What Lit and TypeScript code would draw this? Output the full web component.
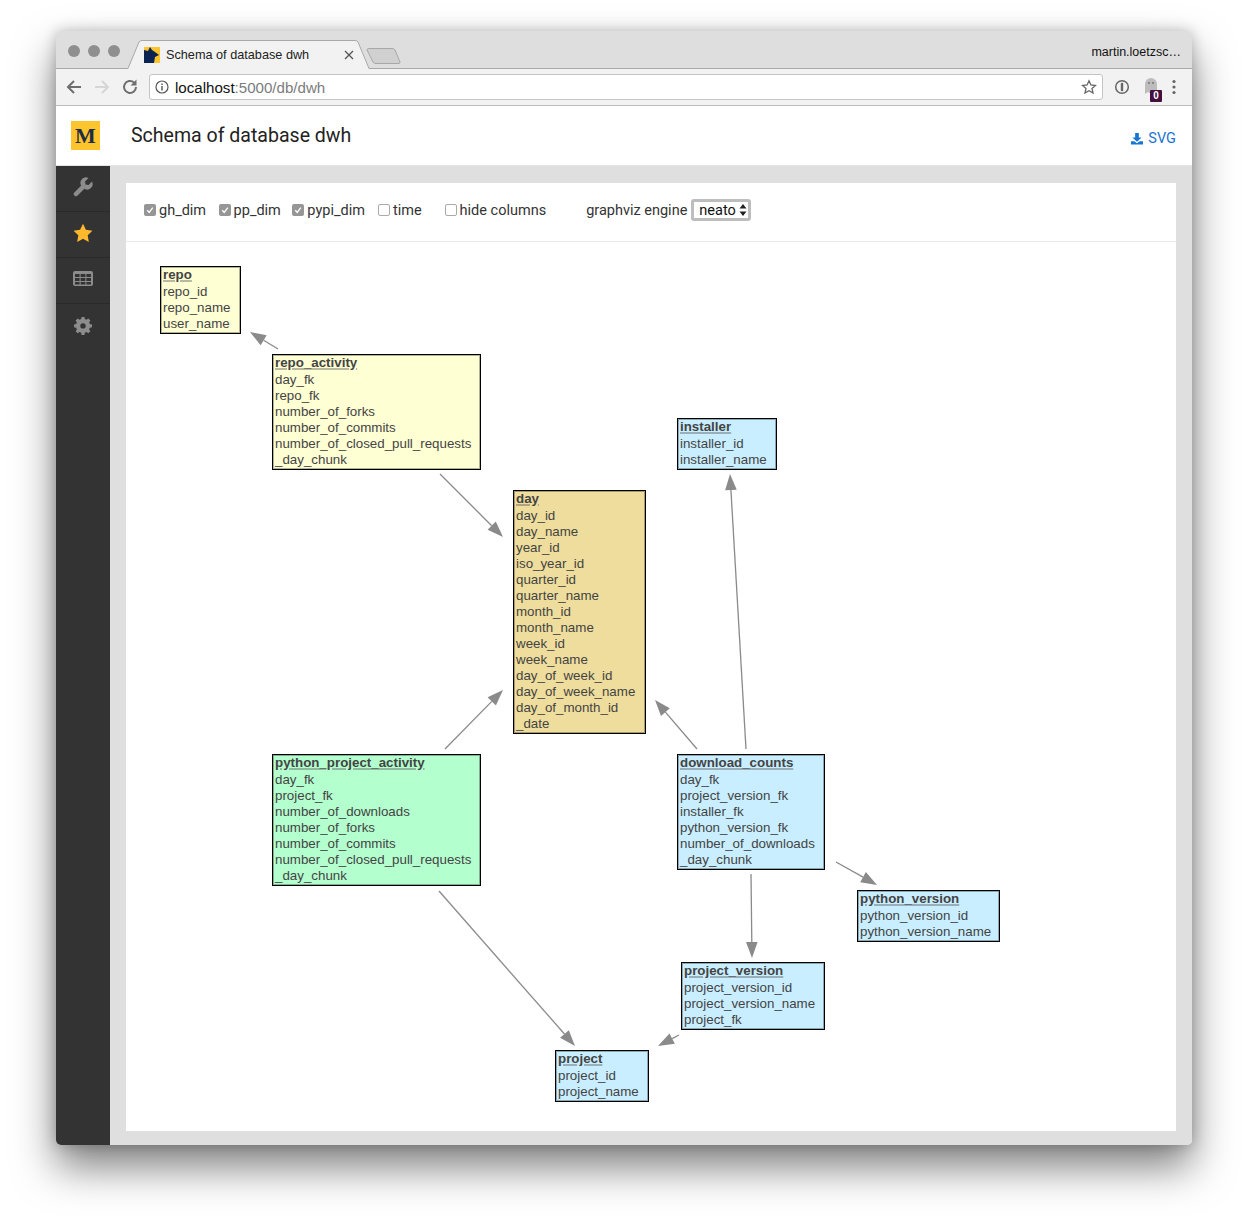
import { LitElement, html, css, svg } from "lit";
import { customElement } from "lit/decorators.js";

type Node = { t: string; c: string[]; x: number; y: number; w: number; h: number; k: string };
const nodes: Node[] = [
  { t: "repo", c: ["repo_id", "repo_name", "user_name"], x: 34, y: 24, w: 81, h: 68, k: "y" },
  { t: "repo_activity", c: ["day_fk", "repo_fk", "number_of_forks", "number_of_commits", "number_of_closed_pull_requests", "_day_chunk"], x: 146, y: 112, w: 209, h: 116, k: "y" },
  { t: "installer", c: ["installer_id", "installer_name"], x: 551, y: 176, w: 100, h: 52, k: "b" },
  { t: "day", c: ["day_id", "day_name", "year_id", "iso_year_id", "quarter_id", "quarter_name", "month_id", "month_name", "week_id", "week_name", "day_of_week_id", "day_of_week_name", "day_of_month_id", "_date"], x: 387, y: 248, w: 133, h: 244, k: "o" },
  { t: "python_project_activity", c: ["day_fk", "project_fk", "number_of_downloads", "number_of_forks", "number_of_commits", "number_of_closed_pull_requests", "_day_chunk"], x: 146, y: 512, w: 209, h: 132, k: "g" },
  { t: "download_counts", c: ["day_fk", "project_version_fk", "installer_fk", "python_version_fk", "number_of_downloads", "_day_chunk"], x: 551, y: 512, w: 148, h: 116, k: "b" },
  { t: "python_version", c: ["python_version_id", "python_version_name"], x: 731, y: 648, w: 143, h: 52, k: "b" },
  { t: "project_version", c: ["project_version_id", "project_version_name", "project_fk"], x: 555, y: 720, w: 144, h: 68, k: "b" },
  { t: "project", c: ["project_id", "project_name"], x: 429, y: 808, w: 94, h: 52, k: "b" },
];

// page coordinates of the edges; the canvas origin is (126,242)
const edges: [number, number, number, number][] = [
  [278, 349, 250, 332],
  [440, 474, 503, 537],
  [445, 749, 503, 690],
  [697, 749, 655, 700],
  [746, 749, 730, 474],
  [439, 891, 575, 1046],
  [751, 874, 752, 958],
  [836, 862, 877, 885],
  [679, 1035, 658, 1046],
];

function arrow(e: [number, number, number, number]) {
  const [a, b, c, d] = e.map((v, i) => v - (i % 2 ? 242 : 126));
  const len = Math.hypot(c - a, d - b);
  const ux = (c - a) / len;
  const uy = (d - b) / len;
  const bx = c - ux * 16;
  const by = d - uy * 16;
  const hw = 5.8;
  const pts = `${c},${d} ${bx - uy * hw},${by + ux * hw} ${bx + uy * hw},${by - ux * hw}`;
  return svg`<line x1=${a} y1=${b} x2=${bx} y2=${by} stroke="#8a8a8a" stroke-width="1.3"></line><polygon points=${pts} fill="#8a8a8a"></polygon>`;
}

@customElement("app-root")
export class AppRoot extends LitElement {
  static styles = css`
    :host { display: block; padding: 31px 56px 80px; background: #fff; font-family: "Liberation Sans", Arial, sans-serif; }
    .win { width: 1136px; height: 1114px; display: flex; flex-direction: column; border-radius: 5px; overflow: hidden; background: #dfdfdf; }
    .shadow { border-radius: 5px; box-shadow: 0 22px 42px rgba(0,0,0,.5), 0 0 14px rgba(0,0,0,.22); }
    .tabs { height: 37px; flex: none; background: #dedede; border-bottom: 1px solid #a8a8a8; display: flex; align-items: flex-end; position: relative; }
    .lights { display: flex; gap: 8px; padding: 0 0 11px 12px; align-self: flex-end; }
    .lights i { width: 12px; height: 12px; border-radius: 50%; background: #8f8f8f; display: block; }
    .tabshape { position: absolute; left: 70px; top: 8px; }
    .tabtext { position: absolute; left: 110px; top: 17px; font-size: 12.7px; color: #222; white-space: nowrap; }
    .fav { position: absolute; left: 88px; top: 16px; }
    .user { margin-left: auto; align-self: center; padding-right: 11px; font-size: 12.5px; color: #111; margin-top: 5px; }
    .bar { height: 37px; flex: none; box-sizing: border-box; background: #f2f2f2; border-bottom: 1px solid #bdbdbd; display: flex; align-items: center; padding-left: 9px; }
    .nav { display: flex; gap: 10px; align-items: center; width: 84px; flex: none; }
    .nav svg { display: block; }
    .omni { width: 954px; height: 26px; flex: none; box-sizing: border-box; background: #fff; border: 1px solid #c4c4c4; border-radius: 3px; display: flex; align-items: center; padding: 0 5px; font-size: 15.1px; color: #111; }
    .omni .dim { color: #7c7c7c; }
    .omni .star { margin-left: auto; }
    .omni .info { margin-right: 6px; }
    .ext { display: flex; align-items: center; margin-left: 11px; position: relative; }
    .ghost { margin-left: 13px; margin-top: -3px; }
    .dots { margin-left: 13px; }
    .badge { position: absolute; left: 36px; top: 11px; width: 12px; height: 12px; background: #44113f; color: #fff; font: bold 10px/12px "Liberation Sans", sans-serif; text-align: center; border-radius: 1px; }
    .head { height: 60px; flex: none; background: #fff; display: flex; align-items: center; box-sizing: border-box; padding: 0 16px 0 15px; border-bottom: 1px solid #e4e4e4; }
    .logo { width: 29px; height: 29px; background: #fec42d; color: #1f2d44; font: bold 22px/29px "Liberation Serif", serif; text-align: center; flex: none; }
    h1 { margin: 0 0 0 31px; font-family: Roboto, sans-serif; font-size: 19.55px; font-weight: 400; color: #222; }
    .svg { margin-left: auto; margin-top: 5px; color: #1a74d2; font-family: Roboto, sans-serif; font-size: 14.5px; display: flex; align-items: center; gap: 4px; }
    .body { flex: 1; display: flex; min-height: 0; }
    .side { width: 54px; flex: none; background: #333; }
    .side div { height: 46px; display: flex; align-items: center; justify-content: center; padding-bottom: 3px; border-bottom: 1px solid #2a2a2a; box-sizing: border-box; }
    .side div:last-child { border-bottom: 0; }
    .side .grid { margin-top: -1px; }
    .main { flex: 1; padding: 17px 16px 14px; }
    .panel { background: #fff; height: 100%; display: flex; flex-direction: column; }
    .filters { height: 59px; flex: none; box-sizing: border-box; border-bottom: 1px solid #e9e9e9; display: flex; align-items: center; padding: 0 0 4px 18px; font-family: Roboto, sans-serif; font-size: 14.5px; color: #333; white-space: nowrap; }
    .cb { display: flex; align-items: center; gap: 3px; }
    .cb i { width: 12px; height: 12px; border-radius: 2px; box-sizing: border-box; display: flex; align-items: center; justify-content: center; }
    .cb i.on { background: #969696; }
    .cb i.off { background: #fff; border: 1px solid #a9a9a9; }
    .sel { margin-left: 4px; width: 60px; height: 22px; box-sizing: border-box; border: 3px solid #bdbdbd; border-radius: 3px; display: flex; align-items: center; justify-content: space-between; padding: 0 1px 0 5px; color: #111; background: #fff; }
    .canvas { flex: 1; position: relative; }
    .canvas svg.edges { position: absolute; left: 0; top: 0; width: 100%; height: 100%; }
    .n { position: absolute; box-sizing: border-box; border: 1px solid #000; box-shadow: inset 0 0 0 1px rgba(0,0,0,.3); padding: 0 2px; font-size: 13.33px; line-height: 16px; color: #444; white-space: nowrap; }
    .n b { display: block; color: #444; margin: -1px 0 1px; line-height: 17px; text-decoration: underline 2px rgba(80,80,80,.4); text-underline-offset: 1px; }
    .y { background: #ffffd4; }
    .b { background: #c9eeff; }
    .o { background: #eedd9c; }
    .g { background: #b4ffce; }
  `;

  private tick(on: boolean) {
    return on
      ? html`<i class="on"><svg width="8" height="8" viewBox="0 0 8 8"><path d="M1.2 4.2 3.2 6.4 6.8 1.6" fill="none" stroke="#fff" stroke-width="1.3"></path></svg></i>`
      : html`<i class="off"></i>`;
  }

  render() {
    const filt: [string, boolean, number][] = [
      ["gh_dim", true, 12.5],
      ["pp_dim", true, 11.5],
      ["pypi_dim", true, 13],
      ["time", false, 23],
      ["hide columns", false, 40],
    ];
    return html`<div class="shadow"><div class="win">
      <div class="tabs">
        <div class="lights"><i></i><i></i><i></i></div>
        <svg class="tabshape" width="290" height="30" viewBox="0 0 290 30">
          <path d="M241 11Q241 9.5 243 9.5H266Q268 9.5 269 11L274 23Q274.5 24.5 272 24.5H250Q248 24.5 247 23Z" fill="#d0d0d0" stroke="#a8a8a8"></path>
          <path d="M0 29.5H2L13 3Q14 1.5 16 1.5H229Q231 1.5 232 3L243 29.5H246V31H0Z" fill="#f2f2f2" stroke="#a8a8a8"></path>
          <path d="M219 12 227 20M227 12 219 20" stroke="#555" stroke-width="1.3"></path>
        </svg>
        <svg class="fav" width="16" height="16" viewBox="0 0 16 16">
          <rect width="16" height="16" fill="#fec42d"></rect>
          <path d="M0 16V3L4 4 6 0 8 3 11 5 15 8 11 10 10 16Z" fill="#0b2350"></path>
        </svg>
        <span class="tabtext">Schema of database dwh</span>
        <span class="user">martin.loetzsc…</span>
      </div>
      <div class="bar">
        <div class="nav">
          <svg width="18" height="18" viewBox="0 0 18 18"><path d="M16 9H3M9 3 3 9 9 15" fill="none" stroke="#6e6e6e" stroke-width="2"></path></svg>
          <svg width="18" height="18" viewBox="0 0 18 18"><path d="M2 9H15M9 3 15 9 9 15" fill="none" stroke="#d6d6d6" stroke-width="2"></path></svg>
          <svg width="18" height="18" viewBox="0 0 18 18"><path d="M15 9A6 6 0 1 1 13 4.5" fill="none" stroke="#6e6e6e" stroke-width="2"></path><path d="M15.5 1.5V7.5H9.5Z" fill="#6e6e6e"></path></svg>
        </div>
        <div class="omni">
          <svg class="info" width="14" height="14" viewBox="0 0 14 14"><circle cx="7" cy="7" r="6" fill="none" stroke="#555" stroke-width="1.2"></circle><path d="M7 6V10.5M7 3.5V5" stroke="#555" stroke-width="1.4"></path></svg>
          <span>localhost<span class="dim">:5000/db/dwh</span></span>
          <svg class="star" width="16" height="16" viewBox="0 0 16 16"><path d="M8 1.8 9.9 6 14.5 6.5 11 9.5 12 14 8 11.7 4 14 5 9.5 1.5 6.5 6.1 6Z" fill="none" stroke="#666" stroke-width="1.3"></path></svg>
        </div>
        <div class="ext">
          <svg width="16" height="16" viewBox="0 0 16 16"><circle cx="8" cy="8" r="6.3" fill="none" stroke="#666" stroke-width="1.5"></circle><rect x="6.8" y="3.8" width="2.4" height="8.4" rx="1" fill="#666"></rect></svg>
          <svg class="ghost" width="16" height="18" viewBox="0 0 16 18"><path d="M2 17V7A6 6 0 0 1 14 7V17L11 15 8 17 5 15Z" fill="#bdbdbd"></path><circle cx="6" cy="6" r="1" fill="#777"></circle><circle cx="10" cy="6" r="1" fill="#777"></circle></svg>
          <span class="badge">0</span>
          <svg class="dots" width="4" height="16" viewBox="0 0 4 16"><circle cx="2" cy="2.5" r="1.6" fill="#666"></circle><circle cx="2" cy="8" r="1.6" fill="#666"></circle><circle cx="2" cy="13.5" r="1.6" fill="#666"></circle></svg>
        </div>
      </div>
      <div class="head">
        <div class="logo">M</div>
        <h1>Schema of database dwh</h1>
        <span class="svg"><svg width="14" height="13" viewBox="0 0 14 14"><path d="M5 1H9V6H12L7 10.5 2 6H5ZM0.5 10H4L7 12 10 10H13.5V13.5H0.5Z" fill="#1a74d2"></path></svg>SVG</span>
      </div>
      <div class="body">
        <div class="side">
          <div><svg width="20" height="20" viewBox="0 0 20 20"><path d="M19 4.5 15.5 8 12.5 7.5 12 4.5 15.5 1A5.5 5.5 0 0 0 8.2 8.6L1.4 15.4A2.2 2.2 0 0 0 4.6 18.6L11.4 11.8A5.5 5.5 0 0 0 19 4.5Z" fill="#8c8c8c"></path></svg></div>
          <div><svg width="20" height="20" viewBox="0 0 20 20"><path d="M10 .8 12.9 6.8 19.4 7.7 14.7 12.3 15.8 18.9 10 15.8 4.2 18.9 5.3 12.3.6 7.7 7.1 6.8Z" fill="#fdb92e"></path></svg></div>
          <div><svg class="grid" width="20" height="15" viewBox="0 0 20 15"><rect width="20" height="15" rx="2" fill="#8c8c8c"></rect><path d="M2 3H6.6V6H2ZM7.6 3H12.4V6H7.6ZM13.4 3H18V6H13.4ZM2 7H6.6V10H2ZM7.6 7H12.4V10H7.6ZM13.4 7H18V10H13.4ZM2 11H6.6V13.6H2ZM7.6 11H12.4V13.6H7.6ZM13.4 11H18V13.6H13.4Z" fill="#333"></path></svg></div>
          <div><svg width="20" height="20" viewBox="0 0 20 20"><path fill-rule="evenodd" d="M8.4 1H11.6L12 3.4 13.9 4.2 15.9 2.8 18.2 5.1 16.8 7.1 17.6 9 20 9.4V12.6L17.6 13 16.8 14.9 18.2 16.9 15.9 19.2 13.9 17.8 12 18.6 11.6 21H8.4L8 18.6 6.1 17.8 4.1 19.2 1.8 16.9 3.2 14.9 2.4 13 0 12.6V9.4L2.4 9 3.2 7.1 1.8 5.1 4.1 2.8 6.1 4.2 8 3.4ZM10 8A3 3 0 1 0 10 14 3 3 0 0 0 10 8Z" fill="#8c8c8c" transform="translate(1 0) scale(.9)"></path></svg></div>
        </div>
        <div class="main">
          <div class="panel">
            <div class="filters">
              ${filt.map(([l, on, m]) => html`<span class="cb" style="margin-right:${m}px">${this.tick(on)}${l}</span>`)}
              <span>graphviz engine</span>
              <span class="sel">neato<svg width="8" height="12" viewBox="0 0 8 12"><path d="M4 0 7.5 4.5H.5ZM4 12 .5 7.5H7.5Z" fill="#222"></path></svg></span>
            </div>
            <div class="canvas">
              <svg class="edges">${edges.map(arrow)}</svg>
              ${nodes.map(
                (n) => html`<div class="n ${n.k}" style="left:${n.x}px;top:${n.y}px;width:${n.w}px;height:${n.h}px"><b>${n.t}</b>${n.c.map((c) => html`<div>${c}</div>`)}</div>`
              )}
            </div>
          </div>
        </div>
      </div>
    </div></div>`;
  }
}
